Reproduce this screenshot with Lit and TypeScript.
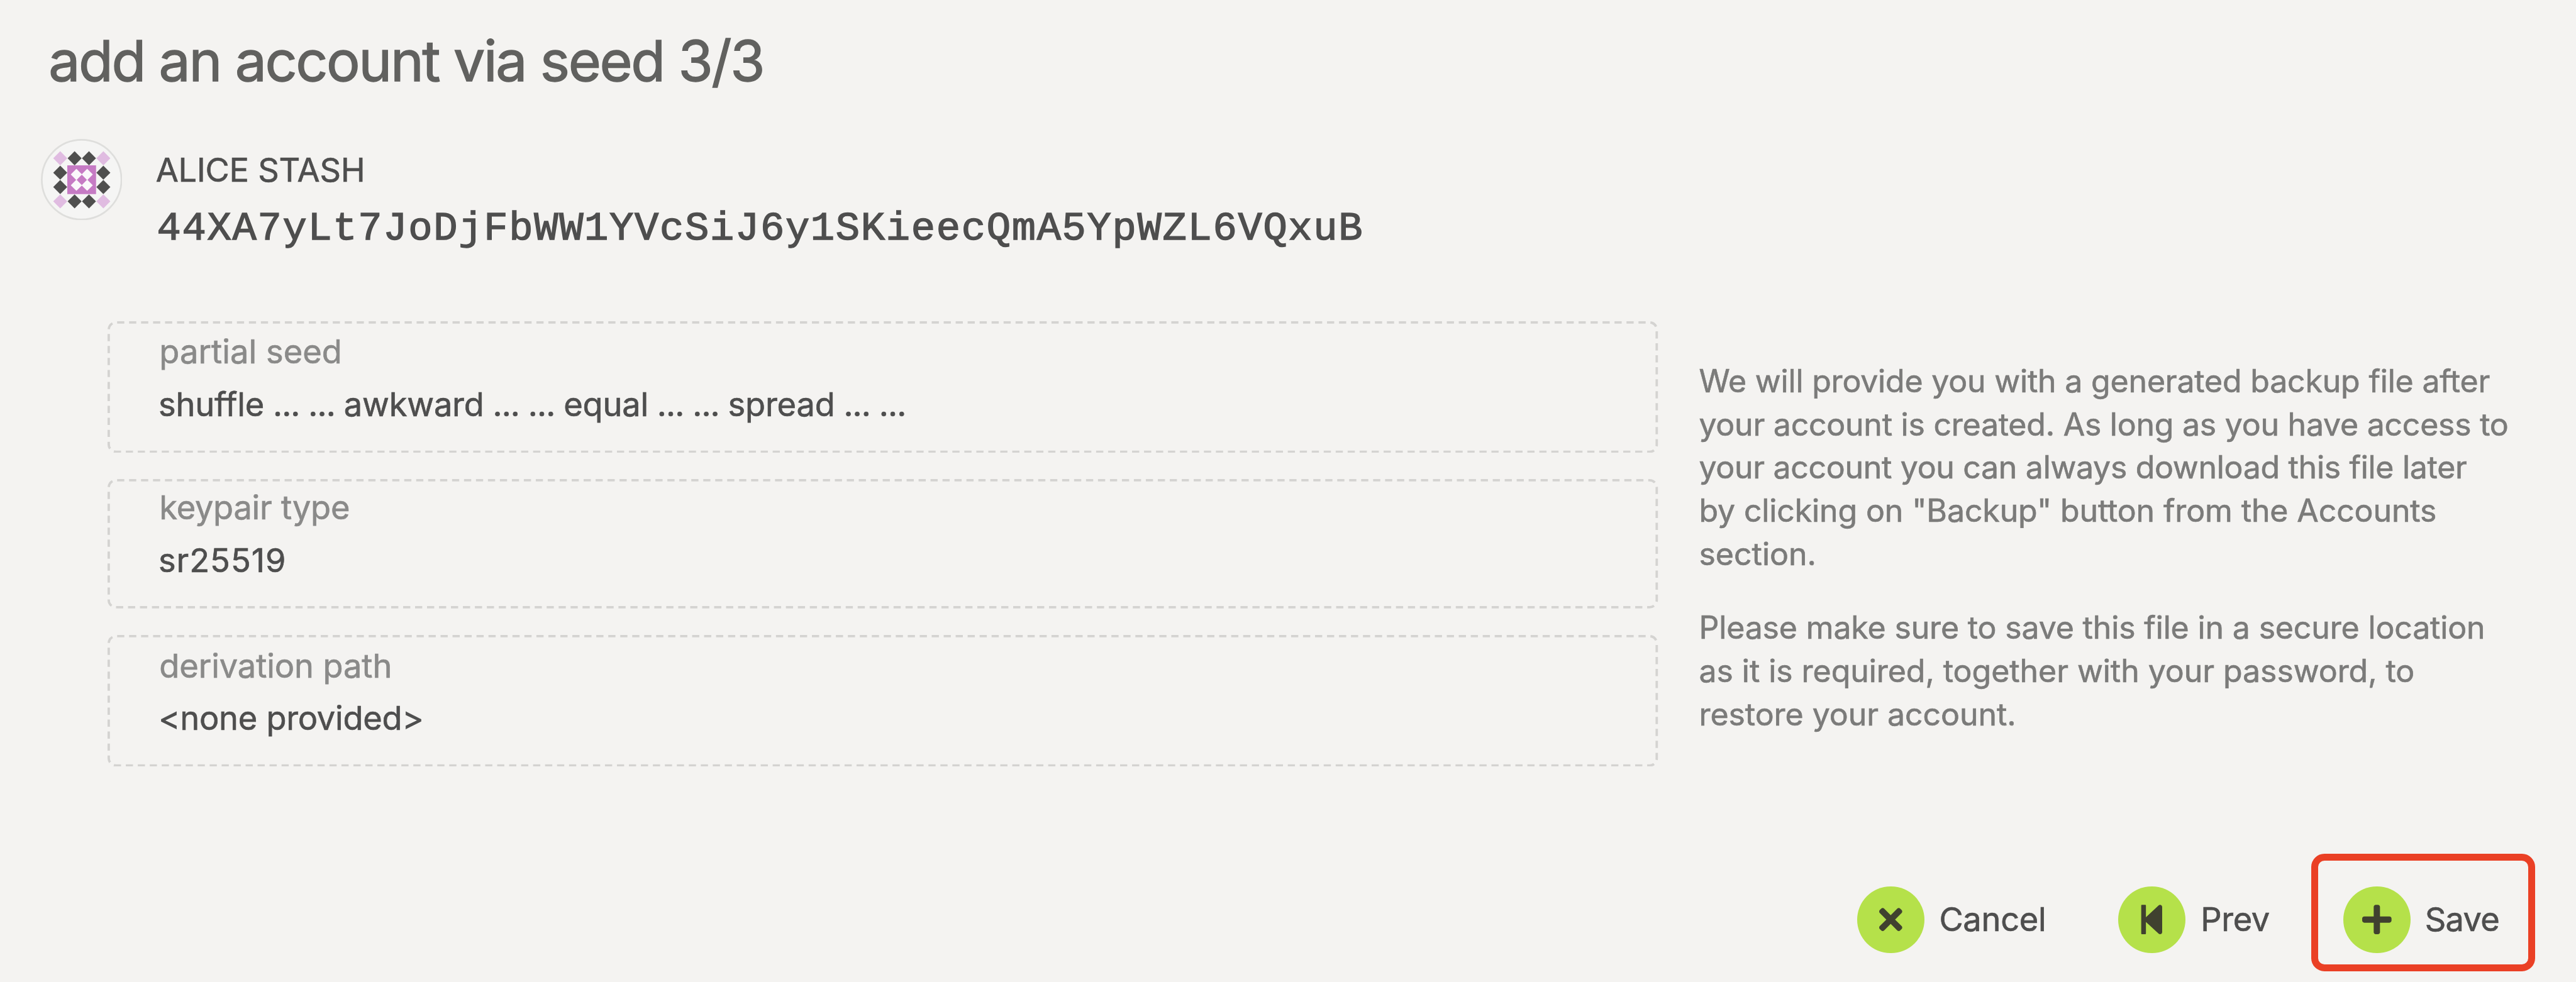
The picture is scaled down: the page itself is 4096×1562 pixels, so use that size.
import { LitElement, html, css, svg, unsafeCSS } from "lit";
import { customElement, property } from "lit/decorators.js";
import { styleMap } from "lit/directives/style-map.js";

const SCALE = 4096 / 4300;
const len = (n: number) => `${(n * SCALE).toFixed(2)}px`;
const px = (n: number) => unsafeCSS(len(n));
const track = (n: number) => styleMap({ letterSpacing: len(n) });

const ICONS: Record<string, { width: number; d: string }> = {
  times: {
    width: 352,
    d: "M242.72 256l100.07-100.07c12.28-12.28 12.28-32.19 0-44.48l-22.24-22.24c-12.28-12.28-32.19-12.28-44.48 0L176 189.28 75.93 89.21c-12.28-12.28-32.19-12.28-44.48 0L9.21 111.45c-12.28 12.28-12.28 32.19 0 44.48L109.28 256 9.21 356.07c-12.28 12.28-12.28 32.19 0 44.48l22.24 22.24c12.28 12.28 32.2 12.28 44.48 0L176 322.72l100.07 100.07c12.28 12.28 32.2 12.28 44.48 0l22.24-22.24c12.28-12.28 12.28-32.19 0-44.48L242.72 256z",
  },
  "step-backward": {
    width: 448,
    d: "M64 468V44c0-6.6 5.4-12 12-12h48c6.6 0 12 5.4 12 12v176.4l195.5-181C352.1 22.3 384 36.6 384 64v384c0 27.4-31.9 41.7-52.5 24.6L136 292.7V468c0 6.6-5.4 12-12 12H76c-6.6 0-12-5.4-12-12z",
  },
  plus: {
    width: 448,
    d: "M416 208H272V64c0-17.67-14.33-32-32-32h-32c-17.67 0-32 14.33-32 32v144H32c-17.67 0-32 14.33-32 32v32c0 17.67 14.33 32 32 32h144v144c0 17.67 14.33 32 32 32h32c17.67 0 32-14.33 32-32V304h144c17.67 0 32-14.33 32-32v-32c0-17.67-14.33-32-32-32z",
  },
};

@customElement("identity-icon")
class IdentityIcon extends LitElement {
  static styles = css`
    :host { display: block; }
    svg { display: block; width: ${px(136)}; height: ${px(136)}; }
  `;

  private diamond(cx: number, cy: number, r: number, fill: string) {
    return svg`<path d="M${cx} ${cy - r}L${cx + r} ${cy}L${cx} ${cy + r}L${cx - r} ${cy}Z" fill=${fill}></path>`;
  }

  render() {
    const steps = [32, 56, 80, 104];
    const outer = steps.flatMap((y, row) =>
      steps
        .map((x, col) => ({ x, y, rowEdge: row % 3 === 0, colEdge: col % 3 === 0 }))
        .filter((c) => c.rowEdge || c.colEdge)
        .map((c) => this.diamond(c.x + 0.3, c.y + 0.3, 11.7, c.rowEdge && c.colEdge ? "#e0bce1" : "#4f4f4e")),
    );
    const inner = [59.3, 77.3].flatMap((x) => [59.3, 77.3].map((y) => this.diamond(x, y, 9.4, "#fbf9fb")));
    return html`<svg viewBox="0 0 136 136">
      <circle cx="68" cy="68" r="66.5" fill="#f5f5f4" stroke="#dededc" stroke-width="2.8"></circle>
      ${outer}
      <rect x="44.1" y="44.1" width="48" height="48" fill="#c67bc4"></rect>
      ${inner}
    </svg>`;
  }
}

@customElement("static-field")
class StaticField extends LitElement {
  @property() label = "";
  @property() value = "";
  @property({ type: Number }) height = 220;
  @property({ type: Number }) labelTrack = 0;
  @property({ type: Number }) valueTrack = 0;

  static styles = css`
    :host { display: block; }
    .box { display: grid; box-sizing: border-box; width: ${px(2588)}; }
    .frame, .content { grid-area: 1 / 1; }
    .frame { display: block; width: 100%; height: 100%; }
    .content {
      display: flex; flex-direction: column; justify-content: flex-start; gap: ${px(27.8)};
      padding: ${px(22)} 0 0 ${px(84.5)};
      font-size: ${px(55)}; line-height: ${px(60)}; white-space: pre;
    }
    .short { padding-top: ${px(18)}; }
    .label { color: #8a8a89; padding-left: ${px(1.5)}; }
    .value { color: #4e4e4e; }
    .dots { letter-spacing: ${px(-0.94)}; }
  `;

  render() {
    const h = this.height;
    return html`<div class="box" style=${styleMap({ height: len(h) })}>
      <svg class="frame" viewBox="0 0 2588 ${h}" preserveAspectRatio="none">
        <rect x="2" y="2" width="2584" height=${h - 4} rx="12" fill="none" stroke="#d4d3d1" stroke-width="4"
          pathLength="5580" stroke-dasharray="12 8" stroke-dashoffset="-2"></rect>
      </svg>
      <div class="content ${h < 220 ? "short" : ""}">
        <div class="label" style=${track(this.labelTrack)}>${this.label}</div>
        <div class="value" style=${track(this.valueTrack)}>${this.value
          .split(/((?: ?\.\.\. ?)+)/)
          .map((part) => (part.includes("...") ? html`<span class="dots">${part}</span>` : part))}</div>
      </div>
    </div>`;
  }
}

@customElement("action-button")
class ActionButton extends LitElement {
  @property() icon = "plus";
  @property() label = "";
  @property({ type: Number }) gap = 25;
  @property({ type: Number }) tracking = 0;
  @property({ type: Boolean }) highlighted = false;

  static styles = css`
    :host { display: block; }
    .button {
      display: inline-flex; align-items: center; position: relative;
      font-size: ${px(55)}; line-height: ${px(60)}; color: #4e4e4e; white-space: nowrap;
    }
    .disc {
      display: flex; align-items: center; justify-content: center;
      width: ${px(112)}; height: ${px(112)}; border-radius: 50%; background: #b5e14a;
    }
    .disc svg { display: block; height: ${px(56)}; fill: #40412f; }
    .ring {
      position: absolute; box-sizing: border-box;
      left: ${px(-54)}; top: ${px(-54)}; width: ${px(373.5)}; height: ${px(195.5)};
      border: ${px(12)} solid #ea4025; border-radius: ${px(22)};
    }
  `;

  render() {
    const icon = ICONS[this.icon];
    return html`<div class="button">
      <span class="disc"><svg viewBox="0 0 ${icon.width} 512"><path d=${icon.d}></path></svg></span>
      <span style=${styleMap({ marginLeft: len(this.gap), letterSpacing: len(this.tracking) })}>${this.label}</span>
      ${this.highlighted ? html`<span class="ring"></span>` : ""}
    </div>`;
  }
}

@customElement("app-root")
class AppRoot extends LitElement {
  static styles = css`
    :host { display: block; }
    .page {
      box-sizing: border-box; width: 4096px; height: 1562px; overflow: hidden;
      padding-top: ${px(51.8)};
      background: #f4f3f1; color: #4e4e4e; font-family: Inter, "Liberation Sans", sans-serif;
      -webkit-text-stroke: ${px(0.7)} currentColor;
    }
    .title {
      margin: 0; padding-left: ${px(81)}; font-weight: 400;
      font-size: ${px(94)}; line-height: ${px(100)}; letter-spacing: ${px(-2.53)}; color: #61615f;
      -webkit-text-stroke-width: ${px(1.4)};
    }
    .account { display: flex; align-items: flex-start; padding: ${px(80)} 0 0 ${px(68)}; height: ${px(224.2)}; }
    .who { padding: ${px(21.9)} 0 0 ${px(56)}; }
    .name { font-size: ${px(55)}; line-height: ${px(60)}; letter-spacing: ${px(-0.3)}; }
    .address {
      margin-top: ${px(28.4)}; padding-left: ${px(2)};
      font-family: "Liberation Mono", monospace; font-size: ${px(67)}; line-height: ${px(80)};
      letter-spacing: ${px(1.76)};
      -webkit-text-stroke-width: ${px(1.6)};
    }
    .body { display: flex; align-items: flex-start; padding: 0 0 0 ${px(180)}; margin-top: ${px(80)}; height: ${px(944)}; }
    .fields { display: flex; flex-direction: column; gap: ${px(44)}; }
    .help {
      padding: ${px(64.9)} 0 0 ${px(68)}; font-size: ${px(52.5)}; line-height: ${px(72)};
      color: #7b7b7a; white-space: nowrap;
    }
    .help p { margin: 0 0 ${px(51.6)}; }
    .help span { display: block; }
    .actions { display: grid; grid-template-columns: ${px(436)} ${px(376)} auto; padding-left: ${px(3100)}; }
  `;

  render() {
    const notes: [string, number][][] = [
      [
        ["We will provide you with a generated backup file after", -0.2],
        ["your account is created. As long as you have access to", -0.25],
        ["your account you can always download this file later", -0.31],
        ['by clicking on "Backup" button from the Accounts', -0.13],
        ["section.", 0],
      ],
      [
        ["Please make sure to save this file in a secure location", -0.16],
        ["as it is required, together with your password, to", -0.05],
        ["restore your account.", -0.05],
      ],
    ];
    return html`<main class="page">
      <h1 class="title">add an account via seed 3/3</h1>
      <section class="account">
        <identity-icon></identity-icon>
        <div class="who">
          <div class="name">ALICE STASH</div>
          <div class="address">44XA7yLt7JoDjFbWW1YVcSiJ6y1SKieecQmA5YpWZL6VQxuB</div>
        </div>
      </section>
      <section class="body">
        <div class="fields">
          <static-field label="partial seed" .labelTrack=${0.05} .valueTrack=${-0.2}
            value="shuffle ... ... awkward ... ... equal ... ... spread ... ..."></static-field>
          <static-field label="keypair type" .labelTrack=${-0.26} value="sr25519" .valueTrack=${1} .height=${216}></static-field>
          <static-field label="derivation path" .labelTrack=${-0.1} value="<none provided>" .valueTrack=${-0.3}></static-field>
        </div>
        <div class="help">
          ${notes.map((lines) => html`<p>${lines.map(([text, t]) => html`<span style=${track(t)}>${text}</span>`)}</p>`)}
        </div>
      </section>
      <nav class="actions">
        <action-button icon="times" label="Cancel" .tracking=${-0.3}></action-button>
        <action-button icon="step-backward" label="Prev" .gap=${25.6} .tracking=${-0.5}></action-button>
        <action-button icon="plus" label="Save" .gap=${23.7} .tracking=${-0.7} highlighted></action-button>
      </nav>
    </main>`;
  }
}
